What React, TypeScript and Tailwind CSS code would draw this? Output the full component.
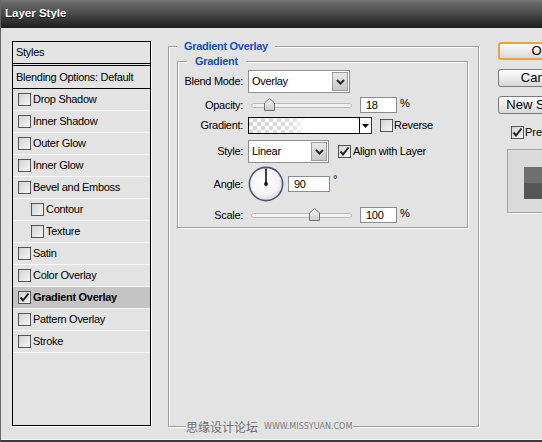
import React from "react";

function Checkbox({ checked = false }: { checked?: boolean }) {
  return (
    <span className="w-[13px] h-[13px] shrink-0 border border-[#555] bg-[linear-gradient(135deg,#d2d2d2,#f7f7f7)] flex items-center justify-center">
      {checked && (
        <svg width="11" height="11" viewBox="0 0 11 11">
          <path d="M1.5 5.5 L4 8.5 L9.5 1.5" fill="none" stroke="#1e1e1e" strokeWidth="2" />
        </svg>
      )}
    </span>
  );
}

function ListRow({
  label,
  checked = false,
  indent = false,
  active = false,
}: {
  label: string;
  checked?: boolean;
  indent?: boolean;
  active?: boolean;
}) {
  return (
    <div
      className={`h-[22px] border-b border-[#f7f7f7] flex items-center gap-[2px] ${indent ? "pl-[18px]" : "pl-[5px]"} ${active ? "bg-[#c4c4c4] font-bold" : ""}`}
    >
      <Checkbox checked={checked} />
      <span>{label}</span>
    </div>
  );
}

function DropBtn() {
  return (
    <div className="w-[16px] h-[19px] mr-[1px] border border-[#9c9c9c] bg-[linear-gradient(#e8e8e8,#c9c9c9)] flex items-center justify-center">
      <svg width="9" height="6" viewBox="0 0 9 6">
        <path d="M1 1 L4.5 4.5 L8 1" stroke="#2a2a2a" strokeWidth="2" fill="none" />
      </svg>
    </div>
  );
}

function Thumb() {
  return (
    <svg width="11" height="13" viewBox="0 0 11 13">
      <defs>
        <linearGradient id="tg" x1="0" y1="0" x2="0" y2="1">
          <stop offset="0" stopColor="#fafafa" />
          <stop offset="1" stopColor="#c8c8c8" />
        </linearGradient>
      </defs>
      <path d="M0.5 12.5 V5 L5.5 0.5 L10.5 5 V12.5 Z" fill="url(#tg)" stroke="#707070" />
    </svg>
  );
}

function Slider({ thumbClass }: { thumbClass: string }) {
  return (
    <div className="relative w-[104px] h-[16px] shrink-0">
      <div className="absolute left-[3px] right-0 top-[6px] h-[5px] rounded-full border border-[#b9b9b9] bg-[#f1f1f1]" />
      <div className={`absolute top-[1px] ${thumbClass}`}>
        <Thumb />
      </div>
    </div>
  );
}

function NumInput({ value, w }: { value: string; w: string }) {
  return (
    <div className={`${w} h-[16px] border border-[#8c8c8c] bg-white pl-[5px] flex items-center leading-none shrink-0`}>
      {value}
    </div>
  );
}

function Label({ children }: { children: React.ReactNode }) {
  return <div className="w-[65px] text-right shrink-0">{children}</div>;
}

function Btn({ children, primary = false, className = "" }: { children: React.ReactNode; primary?: boolean; className?: string }) {
  return (
    <div
      className={`w-[86px] h-[18px] rounded-[3px] flex items-center justify-center text-[13px] tracking-normal bg-[linear-gradient(#fdfdfd,#d9d9d9)] ${primary ? "border-2 border-[#e7a444]" : "border border-[#7a7a7a]"} ${className}`}
    >
      {children}
    </div>
  );
}

export default function App() {
  return (
    <div className="w-[542px] h-[442px] overflow-hidden bg-[#e3e3e3] flex flex-col font-['Liberation_Sans',Arial,sans-serif] text-[11px] tracking-[-0.3px] text-black border-l border-[#666] border-b-2 border-b-[#3a3a3a]">
      {/* Title bar */}
      <div className="h-[28px] shrink-0 flex items-center pl-[4px] bg-[linear-gradient(to_bottom,#7a7a7a_0px,#676767_3px,#555_10px,#1f1f1f_27px)]">
        <span className="text-white font-bold text-[11.5px] tracking-normal [text-shadow:0_1px_0_#000]">Layer Style</span>
      </div>

      {/* Body */}
      <div className="flex flex-1 items-start shadow-[inset_0_-1px_0_#f4f4f4]">
        {/* Styles list */}
        <div className="ml-[11px] mt-[13px] w-[139px] h-[385px] shrink-0 border border-black shadow-[1px_1px_0_#fff] flex flex-col">
          <div className="h-[22px] border-b border-black flex items-center pl-[3px]">Styles</div>
          <div className="h-[1px]" />
          <div className="h-[24px] border-t border-b border-black flex items-center pl-[3px]">Blending Options: Default</div>
          <ListRow label="Drop Shadow" />
          <ListRow label="Inner Shadow" />
          <ListRow label="Outer Glow" />
          <ListRow label="Inner Glow" />
          <ListRow label="Bevel and Emboss" />
          <ListRow label="Contour" indent />
          <ListRow label="Texture" indent />
          <ListRow label="Satin" />
          <ListRow label="Color Overlay" />
          <ListRow label="Gradient Overlay" checked active />
          <ListRow label="Pattern Overlay" />
          <ListRow label="Stroke" />
        </div>

        {/* Outer group: Gradient Overlay */}
        <div className="relative ml-[17px] mt-[18px] w-[311px] h-[381px] shrink-0 border border-[#9e9e9e] shadow-[inset_1px_1px_0_#fff,1px_1px_0_#fff]">
          <div className="absolute left-[8px] top-[-8px] px-[7px] bg-[#e3e3e3] leading-[14px] font-bold text-[#1f4fb3]">
            Gradient Overlay
          </div>

          {/* Inner group: Gradient */}
          <div className="relative ml-[8px] mt-[14px] w-[291px] h-[167px] border border-[#9e9e9e] shadow-[inset_1px_1px_0_#fff,1px_1px_0_#fff] flex flex-col">
            <div className="absolute left-[9px] top-[-8px] px-[8px] bg-[#e3e3e3] leading-[14px] font-bold text-[#1f4fb3]">
              Gradient
            </div>

            {/* Blend mode */}
            <div className="mt-[8px] h-[23px] flex items-center">
              <Label>Blend Mode:</Label>
              <div className="ml-[5px] w-[102px] h-[23px] border border-[#8f8f8f] bg-white flex items-center justify-between pl-[3px]">
                <span>Overlay</span>
                <DropBtn />
              </div>
            </div>

            {/* Opacity */}
            <div className="mt-[4px] h-[16px] flex items-center">
              <Label>Opacity:</Label>
              <div className="ml-[5px] flex items-center">
                <Slider thumbClass="left-[16px]" />
                <div className="ml-[8px]">
                  <NumInput value="18" w="w-[37px]" />
                </div>
                <span className="ml-[3px] self-start mt-[-2px]">%</span>
              </div>
            </div>

            {/* Gradient */}
            <div className="mt-[4px] h-[17px] flex items-center">
              <Label>Gradient:</Label>
              <div className="ml-[5px] flex h-[17px]">
                <div className="w-[112px] h-[17px] border border-black [background-image:linear-gradient(to_right,rgba(255,255,255,0)_0%,rgba(255,255,255,0.25)_40%,#fff_52%),repeating-conic-gradient(#d4d4d4_0_25%,#ffffff_0_50%)] [background-size:100%_100%,8px_8px]" />
                <div className="w-[12px] h-[17px] border border-l-0 border-[#333] bg-white flex items-center justify-center">
                  <svg width="7" height="4" viewBox="0 0 7 4">
                    <path d="M0 0 H7 L3.5 4 Z" fill="#111" />
                  </svg>
                </div>
              </div>
              <div className="ml-[8px] flex items-center gap-[1px]">
                <Checkbox />
                <span>Reverse</span>
              </div>
            </div>

            {/* Style */}
            <div className="mt-[6px] h-[23px] flex items-center">
              <Label>Style:</Label>
              <div className="ml-[5px] w-[81px] h-[23px] border border-[#8f8f8f] bg-white flex items-center justify-between pl-[3px]">
                <span>Linear</span>
                <DropBtn />
              </div>
              <div className="ml-[9px] flex items-center gap-[2px]">
                <Checkbox checked />
                <span>Align with Layer</span>
              </div>
            </div>

            {/* Angle */}
            <div className="mt-[3px] h-[36px] flex items-center">
              <Label>Angle:</Label>
              <div className="ml-[5px] w-[36px] h-[36px] shrink-0">
                <svg width="36" height="36" viewBox="0 0 36 36">
                  <defs>
                    <radialGradient id="dial" cx="0.45" cy="0.4" r="0.6">
                      <stop offset="0" stopColor="#ffffff" />
                      <stop offset="0.7" stopColor="#f4f4f6" />
                      <stop offset="1" stopColor="#dadbe2" />
                    </radialGradient>
                  </defs>
                  <circle cx="18" cy="18" r="16.6" fill="url(#dial)" stroke="#4e5675" strokeWidth="1.6" />
                  <line x1="18" y1="18" x2="18" y2="2.5" stroke="#111" strokeWidth="1.6" />
                  <circle cx="18" cy="18" r="1.9" fill="#111" />
                </svg>
              </div>
              <div className="ml-[4px]">
                <NumInput value="90" w="w-[42px]" />
              </div>
              <span className="ml-[3px] self-start mt-[5px]">°</span>
            </div>

            {/* Scale */}
            <div className="mt-[5px] h-[16px] flex items-center">
              <Label>Scale:</Label>
              <div className="ml-[5px] flex items-center">
                <Slider thumbClass="left-[61px]" />
                <div className="ml-[8px]">
                  <NumInput value="100" w="w-[37px]" />
                </div>
                <span className="ml-[3px] self-start mt-[-2px]">%</span>
              </div>
            </div>
          </div>

          {/* Watermark */}
          <div className="absolute left-[17px] bottom-[-9px] flex items-center gap-[6px] bg-[#e3e3e3] pr-[1px] leading-[16px]">
            <span className="text-[12px] tracking-normal text-[#6e6e6e] font-['Noto_Sans_CJK_SC',sans-serif]">思缘设计论坛</span>
            <span className="text-[8px] tracking-normal text-[#7c7c7c] font-['DejaVu_Sans',sans-serif]">WWW.MISSYUAN.COM</span>
          </div>
        </div>

        {/* Right column */}
        <div className="ml-[19px] mt-[14px] w-[100px] shrink-0 flex flex-col">
          <Btn primary>OK</Btn>
          <Btn className="mt-[9px]">Cancel</Btn>
          <Btn className="mt-[9px]">New Style...</Btn>
          <div className="mt-[10px] ml-[13px] flex items-center gap-[1px]">
            <Checkbox checked />
            <span className="tracking-normal">Preview</span>
          </div>
          <div className="mt-[8px] ml-[9px] w-[80px] h-[64px] border border-[#a3a3a3] bg-[#dadada] shadow-[1px_1px_0_#fff] flex flex-col">
            <div className="ml-[16px] mt-[17px] w-[32px] h-[32px] bg-[linear-gradient(#6f6f6f_50%,#565656_50%)]" />
          </div>
        </div>
      </div>
    </div>
  );
}
